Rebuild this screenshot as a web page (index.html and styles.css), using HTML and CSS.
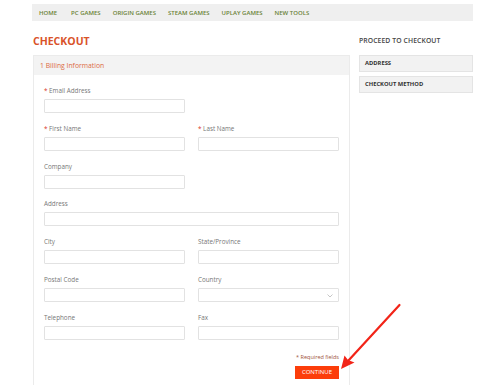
FILE: index.html
```html
<!DOCTYPE html>
<html>
<head>
<meta charset="utf-8">
<link rel="stylesheet" href="styles.css">
</head>
<body>
<div class="page">
  <nav class="nav">
    <a>HOME</a><a>PC GAMES</a><a>ORIGIN GAMES</a><a>STEAM GAMES</a><a>UPLAY GAMES</a><a>NEW TOOLS</a>
  </nav>
  <div class="main">
    <div class="left">
      <h1 class="title">CHECKOUT</h1>
      <div class="panel">
        <div class="panel-head">1 Billing Information</div>
        <div class="panel-body">
          <div class="grid">
            <div class="field"><label><span class="req">*</span> Email Address</label><div class="input"></div></div>
            <div class="field"></div>
            <div class="field"><label><span class="req">*</span> First Name</label><div class="input"></div></div>
            <div class="field"><label><span class="req">*</span> Last Name</label><div class="input"></div></div>
            <div class="field"><label>Company</label><div class="input"></div></div>
            <div class="field"></div>
            <div class="field wide"><label>Address</label><div class="input"></div></div>
            <div class="field"><label>City</label><div class="input"></div></div>
            <div class="field"><label>State/Province</label><div class="input"></div></div>
            <div class="field"><label>Postal Code</label><div class="input"></div></div>
            <div class="field"><label>Country</label><div class="input select"><svg class="chev" width="6" height="4" viewBox="0 0 6 4"><path d="M0.5 0.5 L3 3 L5.5 0.5" fill="none" stroke="#b8b8b8" stroke-width="0.8"/></svg></div></div>
            <div class="field"><label>Telephone</label><div class="input"></div></div>
            <div class="field"><label>Fax</label><div class="input"></div></div>
          </div>
          <div class="actions">
            <div class="required">* Required fields</div>
            <button class="btn">CONTINUE</button>
          </div>
        </div>
      </div>
    </div>
    <aside class="side">
      <div class="side-title">PROCEED TO CHECKOUT</div>
      <div class="side-box first">ADDRESS</div>
      <div class="side-box">CHECKOUT METHOD</div>
    </aside>
  </div>
</div>
<svg class="arrow" width="500" height="385" viewBox="0 0 500 385">
  <line x1="399.5" y1="305" x2="348" y2="361" stroke="#f22418" stroke-width="2.2" stroke-linecap="round"/>
  <polygon points="341,369 344.5,355.5 348,360 354.5,362.5" fill="#f22418"/>
</svg>
</body>
</html>
```
FILE: styles.css
```css
* { box-sizing: border-box; }
html, body { margin: 0; padding: 0; background: #fff; }
body { font-family: "Open Sans", "DejaVu Sans", sans-serif; color: #666; position: relative; width: 500px; height: 385px; overflow: hidden; }
.page { padding: 4px 0 0 32px; width: 473px; }
.nav { display: flex; height: 17px; align-items: center; background: #efefef; padding-left: 7px; gap: 12px; }
.nav a { font-size: 6px; font-weight: 600; color: #6a8236; }
.nav a:first-child { margin-right: 2px; }
.main { display: flex; gap: 9px; }
.left { width: 318px; }
.title { margin: 13px 0 0 1px; font-size: 10.5px; line-height: 14px; font-weight: 700; color: #d9532a; }
.panel { margin-top: 7px; margin-left: 1px; border: 1px solid #ebebeb; border-bottom: none; height: 340px; }
.panel-head { height: 19px; background: #f3f3f3; color: #dc6a44; font-size: 6.8px; line-height: 19px; padding-left: 6px; }
.panel-body { padding: 11px 10px 0 10px; }
.grid { display: grid; grid-template-columns: 141px 141px; column-gap: 13px; row-gap: 10.8px; }
.field { display: flex; flex-direction: column; }
.field.wide { grid-column: 1 / span 2; }
.field label { font-size: 6.3px; line-height: 10px; height: 10px; color: #777; margin-bottom: 3px; }
.req { color: #d9332a; }
.input { height: 14px; border: 1px solid #e2e2e2; border-radius: 1px; background: #fff; position: relative; }
.select .chev { position: absolute; right: 5px; top: 5px; }
.actions { display: flex; flex-direction: column; align-items: flex-end; margin-top: 13px; }
.required { font-size: 5.5px; line-height: 8px; color: #a0523a; }
.btn { margin-top: 5px; width: 44px; height: 13px; border: none; background: #fc3d0a; color: #fff; font-family: "Open Sans", sans-serif; font-size: 6px; padding: 0; line-height: 13px; }
.side { width: 114px; }
.side-title { margin-top: 15px; font-size: 6.8px; line-height: 10px; color: #444; font-weight: 600; letter-spacing: 0.1px; }
.side-box { margin-top: 4px; height: 17px; background: #f2f2f2; border: 1px solid #e4e4e4; font-size: 5.8px; font-weight: 700; color: #333; line-height: 15px; padding-left: 5px; }
.side-box.first { margin-top: 9px; }
.arrow { position: absolute; left: 0; top: 0; pointer-events: none; }
```
